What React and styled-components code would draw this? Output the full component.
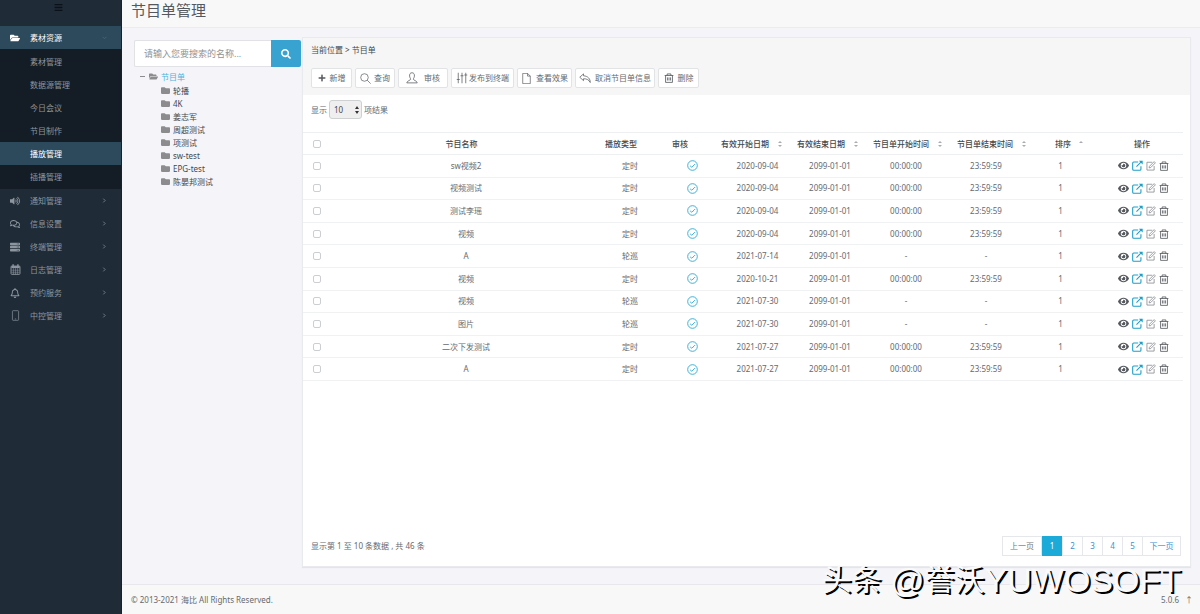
import React from 'react';
import styled, { createGlobalStyle, css } from 'styled-components';
import { FaFolderOpen, FaFolder, FaVolumeUp, FaRegComments, FaServer, FaRegBell, FaSearch, FaPlus, FaBars, FaEye } from 'react-icons/fa';

const GlobalStyle = createGlobalStyle`
  * { box-sizing: border-box; }
  body {
    margin: 0;
    background: #f4f4f9;
    color: #666a6f;
    font: 8px/12px "Noto Sans", "Noto Sans CJK SC", sans-serif;
  }
  button, input, select { font: inherit; color: inherit; }
  a { color: inherit; text-decoration: none; }
  ul { list-style: none; margin: 0; padding: 0; }
`;

const Shell = styled.div`
  display: flex;
  min-height: 100vh;
`;

const Sidebar = styled.nav`
  flex: 0 0 122px;
  background: #1f2b37;
  border-right: 1px solid #16212b;
`;

const MenuToggle = styled.button`
  display: flex;
  align-items: center;
  justify-content: center;
  width: 100%;
  height: 26px;
  padding: 0 4px 12px 0;
  border: 0;
  background: #1f2b37;
  color: #0b1118;
  font-size: 9px;
`;

const NavLink = styled.a`
  display: flex;
  align-items: center;
  height: 23px;
  padding: 0 14px 0 9px;
  color: #8d969f;
  ${p => p.$open && css`
    background: #2c4a5c;
    color: #fff;
    > svg { color: #4d6a7b; }
  `}
`;

const NavIcon = styled.span`
  display: flex;
  justify-content: center;
  width: 12px;
  margin-right: 9px;
  font-size: 10px;
`;

const NavLabel = styled.span`
  flex: 1;
`;

const SubMenu = styled.ul`
  padding: 1px 0;
  background: #141d25;
`;

const SubLink = styled.a`
  display: block;
  height: 23px;
  padding-left: 30px;
  line-height: 23px;
  color: #8d969f;
  ${p => p.$active && css`background: #2c4a5c; color: #fff;`}
`;

const Main = styled.main`
  flex: 1;
  min-width: 0;
  display: flex;
  flex-direction: column;
`;

const TitleBar = styled.header`
  height: 28px;
  padding-left: 9px;
  background: #f8f8f9;
  border-bottom: 1px solid #ececef;
`;

const Title = styled.h1`
  margin: 0;
  font-size: 15px;
  line-height: 20px;
  font-weight: 400;
  color: #55595e;
`;

const Content = styled.div`
  flex: 1;
  display: flex;
  padding: 9px 9px 17px 12px;
`;

const TreePanel = styled.aside`
  flex: 0 0 168px;
  min-width: 0;
  padding: 3px 1px 0 0;
`;

const SearchForm = styled.form`
  display: flex;
  height: 27px;
`;

const SearchInput = styled.input`
  flex: 1;
  min-width: 0;
  padding: 0 9px;
  border: 1px solid #e0e2e6;
  border-right: 0;
  border-radius: 2px 0 0 2px;
  background: #fff;
  font-size: 9px;
  &::placeholder { color: #8f9296; opacity: 1; }
`;

const SearchButton = styled.button`
  width: 30px;
  padding: 2px 0 0;
  border: 0;
  border-radius: 0 2px 2px 0;
  background: #38a3d1;
  color: #fff;
  font-size: 10px;
`;

const TreeRow = styled.a`
  display: flex;
  align-items: center;
  gap: 3px;
  height: 13px;
  padding-left: ${p => (p.$root ? '6px' : '27px')};
  color: ${p => (p.$root ? '#4db3dc' : '#44484c')};
  svg { color: #8c8c8e; font-size: 9px; }
`;

const Tree = styled.ul`
  padding-top: 3px;
`;

const Branches = styled.ul`
  padding-top: 1px;
`;

const Minus = styled.span`
  width: 5px;
  height: 1px;
  margin-right: 1px;
  background: #8c8c8e;
`;

const Card = styled.section`
  flex: 1;
  min-width: 0;
  display: flex;
  flex-direction: column;
  background: #fff;
  border: 1px solid #e9eaee;
  box-shadow: 0 1px 1px #e4e5ea;
`;

const CardHead = styled.div`
  height: 57px;
  padding: 6px 8px;
  background: #f6f6f6;
`;

const Crumbs = styled.div`
  color: #44484c;
`;

const Toolbar = styled.div`
  display: flex;
  gap: 3px;
  padding-top: 12px;
`;

const ToolButton = styled.button`
  display: flex;
  align-items: center;
  justify-content: center;
  gap: ${p => p.$gap || 4}px;
  width: ${p => p.$width}px;
  height: 20px;
  padding: 0;
  border: 1px solid #e2e3e5;
  border-radius: 2px;
  background: #fff;
  white-space: nowrap;
  svg { flex: none; color: #55595e; }
`;

const LengthRow = styled.label`
  display: flex;
  align-items: center;
  gap: 2px;
  padding: 5px 8px 13px;
`;

const LengthBox = styled.span`
  display: grid;
  align-items: center;
  > * { grid-area: 1 / 1; }
  svg { justify-self: end; margin-right: 3px; pointer-events: none; }
`;

const LengthSelect = styled.select`
  appearance: none;
  width: 33px;
  height: 19px;
  padding: 0 4px;
  border: 1px solid #cfd0d2;
  border-radius: 3px;
  background: #efefef;
  color: #44484c;
`;

const Table = styled.table`
  width: calc(100% - 7px);
  height: 249px;
  table-layout: fixed;
  border-collapse: collapse;
  border-top: 1px solid #eeeff1;
  text-align: center;
  tr { height: 22px; }
`;

const HeadCell = styled.th`
  height: 22px;
  padding: 0 ${p => p.$right || 0}px 0 ${p => p.$left || 0}px;
  border-bottom: 1px solid #eeeff1;
  color: #44484c;
  font-weight: 500;
  white-space: nowrap;
`;

const Cell = styled.td`
  height: 22px;
  padding: 0 ${p => p.$right || 0}px 0 ${p => p.$left || 0}px;
  border-bottom: 1px solid #f0f1f3;
  white-space: nowrap;
`;

const SortHead = styled.button`
  display: flex;
  align-items: center;
  justify-content: space-between;
  width: 100%;
  padding: 0;
  border: 0;
  background: none;
`;

const Tick = styled.input`
  appearance: none;
  display: block;
  width: 8px;
  height: 8px;
  margin: 0 auto;
  border: 1px solid #cdced1;
  border-radius: 2px;
  background: #fff;
`;

const Centered = styled.span`
  display: flex;
  justify-content: center;
`;

const Actions = styled.div`
  display: flex;
  align-items: center;
  justify-content: center;
  gap: 3px;
`;

const ActionButton = styled.button`
  display: flex;
  align-items: center;
  padding: 0;
  border: 0;
  background: none;
  color: ${p => p.$color || '#55595e'};
  font-size: 11px;
`;

const CardFoot = styled.div`
  display: flex;
  align-items: center;
  justify-content: space-between;
  margin-top: auto;
  padding: 0 9px 10px 8px;
`;

const Pager = styled.div`
  display: flex;
  border: 1px solid #e6e7ea;
`;

const PageLink = styled.a`
  width: ${p => (p.$wide ? '38px' : '20px')};
  height: 18px;
  line-height: 18px;
  text-align: center;
  color: ${p => (p.$muted ? '#77797d' : '#3d8fd0')};
  & + & { border-left: 1px solid #e6e7ea; }
  ${p => p.$current && css`
    && {
      width: 21px;
      height: 20px;
      margin: -1px 0;
      line-height: 20px;
      border: 0;
      background: #1caad9;
      color: #fff;
    }
  `}
`;

const Footer = styled.footer`
  position: relative;
  display: flex;
  justify-content: space-between;
  height: 30px;
  padding: 9px 7px 0 9px;
  background: #f8f8f8;
  border-top: 1px solid #e8e8ec;
`;

const Version = styled.span`
  display: flex;
  gap: 6px;
`;

const Watermark = styled.div`
  position: absolute;
  right: 19px;
  bottom: 20px;
  display: flex;
  align-items: center;
  font: 30px/28px "Liberation Sans", "Noto Sans CJK SC", sans-serif;
  color: #fafafa;
  text-shadow: 2px 2px 0 #000;
  white-space: nowrap;
`;

const WatermarkLatin = styled.span`
  font-size: 34px;
`;

const Line = ({ size = 11, box = 16, children, width = 1, ...rest }) => (
  <svg width={size} height={size} viewBox={`0 0 ${box} ${box}`} fill="none" stroke="currentColor" strokeWidth={width} aria-hidden="true" {...rest}>
    {children}
  </svg>
);

const SearchThin = () => <Line><circle cx="6.5" cy="6.5" r="5.5" /><path d="M10.5 10.5 15.5 15.5" /></Line>;
const UserThin = () => <Line size={12}><path d="M8 1C5.5 1 4.5 3 4.8 5.5 5 7.5 6 8.5 6.3 9.5 6.3 11 1.5 11.5 1 14.5H15C14.5 11.5 9.7 11 9.7 9.5 10 8.5 11 7.5 11.2 5.5 11.5 3 10.5 1 8 1Z" /></Line>;
const SlidersThin = () => <Line size={12}><path d="M3 1V15M8 1V15M13 1V15M1 10H5M6 5H10M11 4H15" /></Line>;
const PageThin = () => <Line><path d="M2.5 .5H9.5L13.5 4.5V15.5H2.5ZM9.5 .5V4.5H13.5" /></Line>;
const ReplyThin = () => <Line size={12}><path d="M6 2.5 1 7 6 11.5V9C10 9 13 10 15 14 15 9 12 5.5 6 5Z" /></Line>;
const TrashThin = () => <Line size={10} width={1.3}><path d="M1 4H15M5 4V1.5H11V4M2.5 4V15H13.5V4M5.5 7V12M8 7V12M10.5 7V12" /></Line>;
const MobileThin = () => <Line size={11}><rect x="3.5" y="1" width="9" height="14" rx="1" /><path d="M7 13H9" /></Line>;
const CalendarIcon = () => (
  <Line size={11} width={1.4}>
    <rect x="1.5" y="3" width="13" height="12" rx="1" />
    <path d="M2 4.5H14" strokeWidth="3" />
    <path d="M4.5 .5V4M11.5 .5V4" strokeWidth="2" />
    <path d="M2 9H14M2 12H14M5 6V15M8 6V15M11 6V15" strokeWidth=".8" />
  </Line>
);
const Chevron = ({ down }) => <Line size={5} box={8} width={1.2}><path d={down ? 'M1 3 4 6 7 3' : 'M2 1 5 4 2 7'} /></Line>;
const CheckRing = () => <Line size={11} width={1.3} stroke="#2aa9d2"><circle cx="8" cy="8" r="7" /><path d="M4.5 8.5 7 10.5 11.5 6" /></Line>;
const OpenIcon = () => (
  <Line size={11} width={1.6}>
    <path d="M9 3H2.5Q1 3 1 4.5V13.5Q1 15 2.5 15H11.5Q13 15 13 13.5V9M6.5 9.5 13 3" />
    <path d="M10 1H15.5V6.5Z" fill="currentColor" stroke="none" />
  </Line>
);
const EditIcon = () => <Line size={10} width={1.2}><path d="M10 2H1.5V14.5H13V8M5 11 5.5 8.5 13 1 15 3 7.5 10.5Z" /></Line>;

const SortMark = ({ up }) => (
  <svg width="4" height="8" viewBox="0 0 4 8" fill="#a9abb0" aria-hidden="true">
    <path d={up ? 'M0 3 2 1 4 3Z' : 'M0 3 2 1 4 3ZM0 5 2 7 4 5Z'} />
  </svg>
);

const subItems = ['素材管理', '数据源管理', '今日会议', '节目制作', '播放管理', '插播管理'];
const navItems = [
  ['通知管理', FaVolumeUp],
  ['信息设置', FaRegComments],
  ['终端管理', FaServer],
  ['日志管理', CalendarIcon],
  ['预约服务', FaRegBell],
  ['中控管理', MobileThin],
];
const treeItems = ['轮播', '4K', '姜志军', '周超测试', '项测试', 'sw-test', 'EPG-test', '陈晏邦测试'];
const tools = [
  ['新增', FaPlus, 41],
  ['查询', SearchThin, 40, 3],
  ['审核', UserThin, 50, 6],
  ['发布到终端', SlidersThin, 63, 1],
  ['查看效果', PageThin, 55],
  ['取消节目单信息', ReplyThin, 80],
  ['删除', TrashThin, 41],
];

const columns = [
  { share: 261, label: '节目名称', body: [9, 0] },
  { share: 58, label: '播放类型', body: [18, 0] },
  { share: 66, label: '审核', head: [0, 6], body: [20, 0] },
  { share: 71, label: '有效开始日期', sort: 'both', head: [5, 5], body: [12, 0] },
  { share: 79, label: '有效结束日期', sort: 'both', head: [10, 8], body: [7, 0] },
  { share: 82, label: '节目单开始时间', sort: 'both', head: [7, 6], body: [0, 2] },
  { share: 85, label: '节目单结束时间', sort: 'both', head: [9, 7], body: [0, 9] },
  { share: 55, label: '排序', sort: 'up', head: [22, 5] },
  { share: 95, label: '操作', head: [13, 0], body: [17, 0] },
];
const pct = n => `${(n / 880) * 100}%`;

const allDay = ['00:00:00', '23:59:59'];
const rows = [
  ['sw视频2', '定时', '2020-09-04', ...allDay],
  ['视频测试', '定时', '2020-09-04', ...allDay],
  ['测试李瑶', '定时', '2020-09-04', ...allDay],
  ['视频', '定时', '2020-09-04', ...allDay],
  ['A', '轮巡', '2021-07-14', '-', '-'],
  ['视频', '定时', '2020-10-21', ...allDay],
  ['视频', '轮巡', '2021-07-30', '-', '-'],
  ['图片', '轮巡', '2021-07-30', '-', '-'],
  ['二次下发测试', '定时', '2021-07-27', ...allDay],
  ['A', '定时', '2021-07-27', ...allDay],
];

const RowActions = () => (
  <Actions>
    <ActionButton aria-label="查看"><FaEye /></ActionButton>
    <ActionButton aria-label="打开" $color="#1d9fc9"><OpenIcon /></ActionButton>
    <ActionButton aria-label="编辑" $color="#7d8085"><EditIcon /></ActionButton>
    <ActionButton aria-label="删除"><TrashThin /></ActionButton>
  </Actions>
);

export default function App() {
  return (
    <>
      <GlobalStyle />
      <Shell lang="zh-CN">
        <Sidebar>
          <MenuToggle aria-label="菜单"><FaBars /></MenuToggle>
          <ul>
            <li>
              <NavLink href="#" $open><NavIcon><FaFolderOpen /></NavIcon><NavLabel>素材资源</NavLabel><Chevron down /></NavLink>
              <SubMenu>
                {subItems.map(t => <li key={t}><SubLink href="#" $active={t === '播放管理'}>{t}</SubLink></li>)}
              </SubMenu>
            </li>
            {navItems.map(([t, Icon]) => (
              <li key={t}><NavLink href="#"><NavIcon><Icon /></NavIcon><NavLabel>{t}</NavLabel><Chevron /></NavLink></li>
            ))}
          </ul>
        </Sidebar>
        <Main>
          <TitleBar><Title>节目单管理</Title></TitleBar>
          <Content>
            <TreePanel>
              <SearchForm>
                <SearchInput aria-label="搜索" placeholder="请输入您要搜索的名称..." />
                <SearchButton type="button" aria-label="搜索"><FaSearch /></SearchButton>
              </SearchForm>
              <Tree>
                <li>
                  <TreeRow href="#" $root><Minus /><FaFolderOpen />节目单</TreeRow>
                  <Branches>
                    {treeItems.map(t => <li key={t}><TreeRow href="#"><FaFolder />{t}</TreeRow></li>)}
                  </Branches>
                </li>
              </Tree>
            </TreePanel>
            <Card>
              <CardHead>
                <Crumbs>当前位置 &gt; 节目单</Crumbs>
                <Toolbar>
                  {tools.map(([t, Icon, w, gap]) => <ToolButton key={t} $width={w} $gap={gap}><Icon />{t}</ToolButton>)}
                </Toolbar>
              </CardHead>
              <LengthRow>
                显示
                <LengthBox>
                  <LengthSelect defaultValue="10"><option>10</option><option>25</option></LengthSelect>
                  <svg width="4" height="8" viewBox="0 0 4 8" fill="#333" aria-hidden="true"><path d="M0 3 2 0 4 3ZM0 5 2 8 4 5Z" /></svg>
                </LengthBox>
                项结果
              </LengthRow>
              <Table>
                <colgroup>
                  <col style={{ width: pct(28) }} />
                  {columns.map(c => <col key={c.label} style={{ width: pct(c.share) }} />)}
                </colgroup>
                <thead>
                  <tr>
                    <HeadCell><Tick type="checkbox" aria-label="全选" /></HeadCell>
                    {columns.map(c => (
                      <HeadCell key={c.label} $left={c.head?.[0]} $right={c.head?.[1]}>
                        {c.sort ? <SortHead>{c.label}<SortMark up={c.sort === 'up'} /></SortHead> : c.label}
                      </HeadCell>
                    ))}
                  </tr>
                </thead>
                <tbody>
                  {rows.map(([name, type, start, from, to], i) => {
                    const values = [name, type, <Centered><CheckRing /></Centered>, start, '2099-01-01', from, to, '1', <RowActions />];
                    return (
                      <tr key={i}>
                        <Cell><Tick type="checkbox" aria-label={name} /></Cell>
                        {values.map((v, j) => <Cell key={j} $left={columns[j].body?.[0]} $right={columns[j].body?.[1]}>{v}</Cell>)}
                      </tr>
                    );
                  })}
                </tbody>
              </Table>
              <CardFoot>
                <span>显示第 1 至 10 条数据 , 共 46 条</span>
                <Pager>
                  <PageLink href="#" $wide $muted>上一页</PageLink>
                  <PageLink href="#" $current>1</PageLink>
                  {[2, 3, 4, 5].map(n => <PageLink key={n} href="#">{n}</PageLink>)}
                  <PageLink href="#" $wide>下一页</PageLink>
                </Pager>
              </CardFoot>
            </Card>
          </Content>
          <Footer>
            <span>© 2013-2021 海比 All Rights Reserved.</span>
            <Version>5.0.6<span>↑</span></Version>
            <Watermark>头条&nbsp;<WatermarkLatin>@</WatermarkLatin>誉沃<WatermarkLatin>YUWOSOFT</WatermarkLatin></Watermark>
          </Footer>
        </Main>
      </Shell>
    </>
  );
}
